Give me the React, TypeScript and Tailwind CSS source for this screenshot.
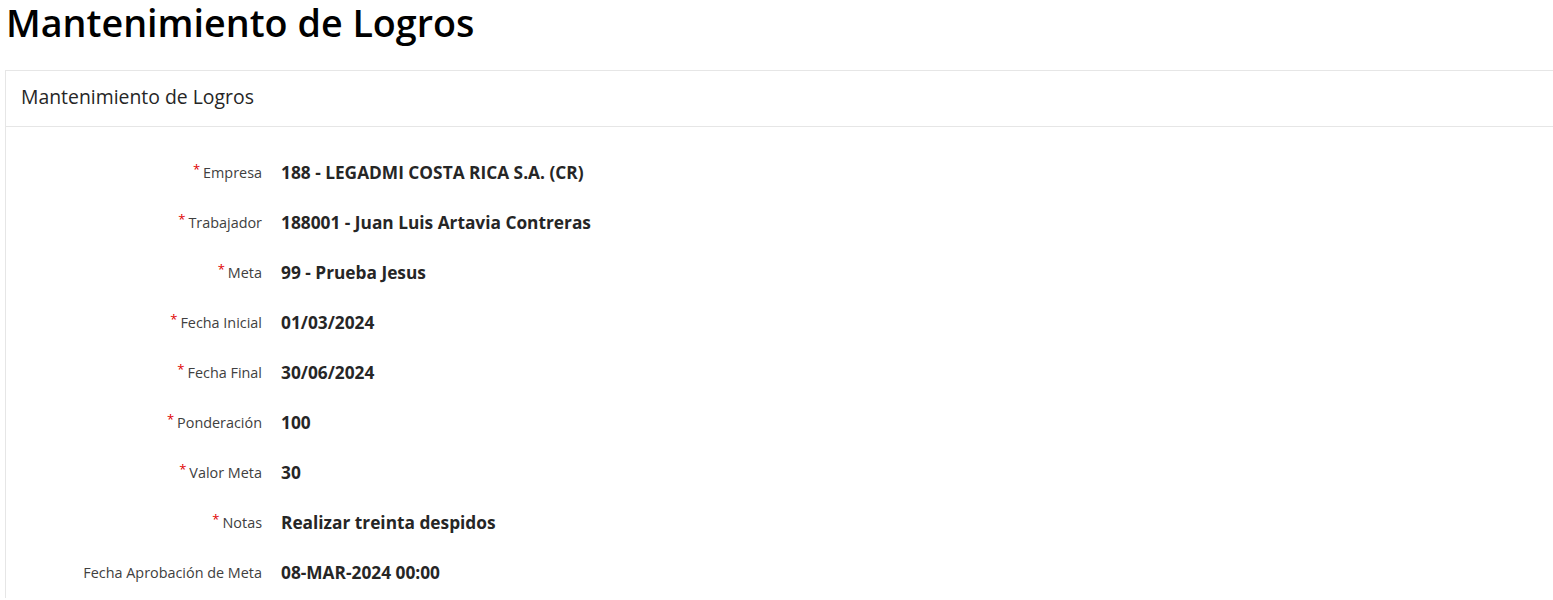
import React from "react";

const fields = [
  { label: "Empresa", value: "188 - LEGADMI COSTA RICA S.A. (CR)", required: true },
  { label: "Trabajador", value: "188001 - Juan Luis Artavia Contreras", required: true },
  { label: "Meta", value: "99 - Prueba Jesus", required: true },
  { label: "Fecha Inicial", value: "01/03/2024", required: true },
  { label: "Fecha Final", value: "30/06/2024", required: true },
  { label: "Ponderación", value: "100", required: true },
  { label: "Valor Meta", value: "30", required: true },
  { label: "Notas", value: "Realizar treinta despidos", required: true },
  { label: "Fecha Aprobación de Meta", value: "08-MAR-2024 00:00", required: false },
];

function App() {
  return (
    <div className="min-h-screen bg-white font-['Open_Sans',sans-serif] text-[#262626]">
      <h1 className="px-[6px] h-[70px] text-[37.7px] font-semibold leading-[46px] text-black">
        Mantenimiento de Logros
      </h1>

      <div className="ml-[5px] border-l border-t border-[#e6e6e6]">
        <div className="h-[56px] flex items-center px-[15px] border-b border-[#e6e6e6]">
          <h2 className="text-[19.4px] leading-[24px] -mt-[3px] text-[#262626]">Mantenimiento de Logros</h2>
        </div>

        <div className="pt-[21px]">
          {fields.map((f) => (
            <div key={f.label} className="h-[50px] flex items-center">
              <div className="w-[256px] text-right text-[14.4px] text-[#404040]">
                {f.required && <span className="text-[#e00000] text-[13px] relative -top-[4px] mr-[3px]">*</span>}
                {f.label}
              </div>
              <div className="ml-[19px] text-[17.3px] font-bold text-[#262626]">{f.value}</div>
            </div>
          ))}
        </div>
      </div>
    </div>
  );
}

export default App;
